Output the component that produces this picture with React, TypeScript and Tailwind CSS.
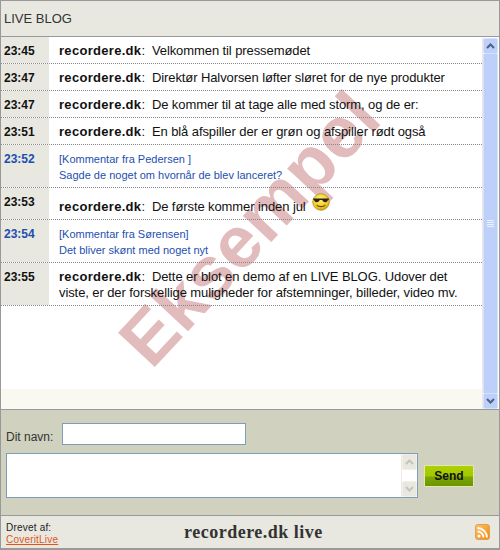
const entries = [
  { time: "23:45", text: "Velkommen til pressemødet" },
  { time: "23:47", text: "Direktør Halvorsen løfter sløret for de nye produkter" },
  { time: "23:47", text: "De kommer til at tage alle med storm, og de er:" },
  { time: "23:51", text: "En blå afspiller der er grøn og afspiller rødt også" },
];

function Smiley() {
  return (
    <svg width="18" height="18" viewBox="0 0 18 18" className="absolute left-[263px] top-[5px]">
      <defs>
        <radialGradient id="face" cx="45%" cy="35%" r="70%">
          <stop offset="0%" stopColor="#fff27a" />
          <stop offset="70%" stopColor="#f2c81e" />
          <stop offset="100%" stopColor="#b98a10" />
        </radialGradient>
      </defs>
      <circle cx="9" cy="9" r="8.3" fill="url(#face)" stroke="#a98a20" strokeWidth="0.7" />
      <path d="M1 5.5h16v1l-1 .3c-.3 1.600-1.300 2.400-2.800 2.400-1.500 0-2.400-.9-2.900-2.200H7.700c-.5 1.300-1.400 2.200-2.900 2.200-1.500 0-2.500-.8-2.800-2.400l-1-.3z" fill="#2a2118" />
      <path d="M5 12.300c1.200 1.700 6.800 1.700 8 0" fill="none" stroke="#6b4a08" strokeWidth="1.100" strokeLinecap="round" />
    </svg>
  );
}

function Row({ time, blue, className, children }: { time: string; blue?: boolean; className: string; children: React.ReactNode }) {
  return (
    <div className={`relative z-10 flex border-b border-dotted border-[#888888] ${className}`}>
      <div className={`w-[48px] shrink-0 bg-[#e8e8e1] pl-[3px] pt-[7px] text-[12px] leading-[14px] font-bold ${blue ? "text-[#1d4fb0]" : "text-[#111111]"}`}>
        {time}
      </div>
      <div className="relative flex-1 pl-[10px]">{children}</div>
    </div>
  );
}

function Chevron({ up, color }: { up?: boolean; color: string }) {
  return (
    <svg width="9" height="6" viewBox="0 0 9 6">
      <path d={up ? "M1 5l3.500-3.500L8 5" : "M1 1l3.500 3.500L8 1"} fill="none" stroke={color} strokeWidth="2" />
    </svg>
  );
}

function ScrollButton({ up }: { up?: boolean }) {
  return (
    <div className="flex h-[16px] shrink-0 items-center justify-center rounded-[2px] border border-[#d6e2fb] bg-[#bcd0f9]">
      <Chevron up={up} color="#4d6185" />
    </div>
  );
}

export default function App() {
  return (
    <div className="flex h-[550px] w-[500px] flex-col border border-b-2 border-[#999999] bg-white font-['Liberation_Sans',Arial,sans-serif] text-[#111111]">
      <header className="flex h-[36px] shrink-0 items-center border-b border-[#999999] bg-[#e8e8e1] pl-[3px] text-[13px] text-[#333333]">
        LIVE BLOG
      </header>

      <div className="flex min-h-0 flex-1">
        <div className="relative flex-1 overflow-hidden bg-[linear-gradient(to_bottom,#ffffff_352px,#f9f9f2_352px)]">
          <div className="absolute left-[-32px] top-[155px] z-0 w-[560px] -rotate-[47deg] text-center text-[73px] leading-none font-bold text-[#e2bcbc]">
            Eksempel
          </div>

          {entries.map((entry, i) => (
            <Row key={i} time={entry.time} className="h-[27px]">
              <p className="pt-[6px] text-[13px] leading-[16px] tracking-[-0.09px]">
                <strong className="tracking-[0.3px]">recordere.dk</strong>:<span className="ml-[7px]">{entry.text}</span>
              </p>
            </Row>
          ))}

          <Row time="23:52" blue className="h-[43px]">
            <div className="pt-[6px] text-[11px] leading-[16px] text-[#1d4fb0]">
              <p>[Kommentar fra Pedersen ]</p>
              <p>Sagde de noget om hvornår de blev lanceret?</p>
            </div>
          </Row>

          <Row time="23:53" className="h-[32px]">
            <p className="pt-[11px] text-[13px] leading-[16px] tracking-[-0.09px]">
              <strong className="tracking-[0.3px]">recordere.dk</strong>:<span className="ml-[7px]">De første kommer inden jul</span>
            </p>
            <Smiley />
          </Row>

          <Row time="23:54" blue className="h-[43px]">
            <div className="pt-[6px] text-[11px] leading-[16px] text-[#1d4fb0]">
              <p>[Kommentar fra Sørensen]</p>
              <p>Det bliver skønt med noget nyt</p>
            </div>
          </Row>

          <Row time="23:55" className="h-[43px]">
            <p className="pt-[6px] pr-[20px] text-[13px] leading-[16px] tracking-[-0.09px]">
              <strong className="tracking-[0.3px]">recordere.dk</strong>:<span className="ml-[7px]">Dette er blot en demo af en LIVE BLOG. Udover det viste, er der forskellige muligheder for afstemninger, billeder, video mv.</span>
            </p>
          </Row>
        </div>

        <div className="flex w-[17px] shrink-0 flex-col border-l border-[#f3e6e6] bg-white pr-px pt-px">
          <ScrollButton up />
          <div className="flex flex-1 items-center justify-center border-x border-[#d6e2fb] bg-[#bcd0f9]">
            <div className="flex w-[7px] flex-col gap-px">
              <div className="h-px bg-[#eef3fe]" />
              <div className="h-px bg-[#eef3fe]" />
              <div className="h-px bg-[#eef3fe]" />
              <div className="h-px bg-[#eef3fe]" />
            </div>
          </div>
          <ScrollButton />
        </div>
      </div>

      <section className="h-[107px] shrink-0 border-y border-[#999999] bg-[#d0d1bf] pl-[5px] pt-[13px]">
        <div className="flex items-end">
          <label className="w-[56px] text-[12px] leading-[16px] text-[#333333]">Dit navn:</label>
          <div className="h-[22px] w-[184px] border border-[#7f9db9] bg-white" />
        </div>
        <div className="mt-[8px] flex items-center">
          <div className="flex h-[45px] w-[412px] justify-end border border-[#7f9db9] bg-white">
            <div className="flex w-[16px] flex-col justify-between border-l border-[#f3e6e6]">
              <div className="flex h-[16px] items-center justify-center rounded-[2px] border border-[#f0efe8] bg-[#e8e8e1]">
                <Chevron up color="#c4c4ba" />
              </div>
              <div className="flex h-[16px] items-center justify-center rounded-[2px] border border-[#f0efe8] bg-[#e8e8e1]">
                <Chevron color="#c4c4ba" />
              </div>
            </div>
          </div>
          <button className="ml-[6px] h-[22px] w-[50px] rounded-[1px] border border-[#e2e8b0] bg-[linear-gradient(to_bottom,#aed000_0%,#a2c800_50%,#7ea800_55%,#6a9600_100%)] text-[12px] leading-none font-bold text-[#111111]">
            Send
          </button>
        </div>
      </section>

      <footer className="flex h-[32px] shrink-0 items-center bg-[#e8e8e1] pl-[5px] pr-[9px]">
        <div className="w-[178px] pt-[3px] text-[10px] leading-[12px] tracking-[0.2px]">
          <p className="font-medium text-[#222222]">Drevet af:</p>
          <a className="text-[#e0561a] underline">CoveritLive</a>
        </div>
        <div className="flex-1 font-['Liberation_Serif',serif] text-[18px] font-bold tracking-[0.5px] text-[#333333]">
          recordere.dk live
        </div>
        <svg width="15" height="16" viewBox="0 0 15 16">
          <defs>
            <linearGradient id="rss" x1="0" y1="0" x2="1" y2="1">
              <stop offset="0%" stopColor="#ffc266" />
              <stop offset="100%" stopColor="#f08a10" />
            </linearGradient>
          </defs>
          <rect x="0.500" y="0.500" width="14" height="15" rx="2.500" fill="url(#rss)" stroke="#e0a050" />
          <circle cx="4" cy="12" r="1.500" fill="#ffffff" />
          <path d="M2.500 7.500a6 6 0 0 1 6 6M2.500 4a9.500 9.500 0 0 1 9.500 9.500" fill="none" stroke="#ffffff" strokeWidth="1.800" />
        </svg>
      </footer>
    </div>
  );
}
